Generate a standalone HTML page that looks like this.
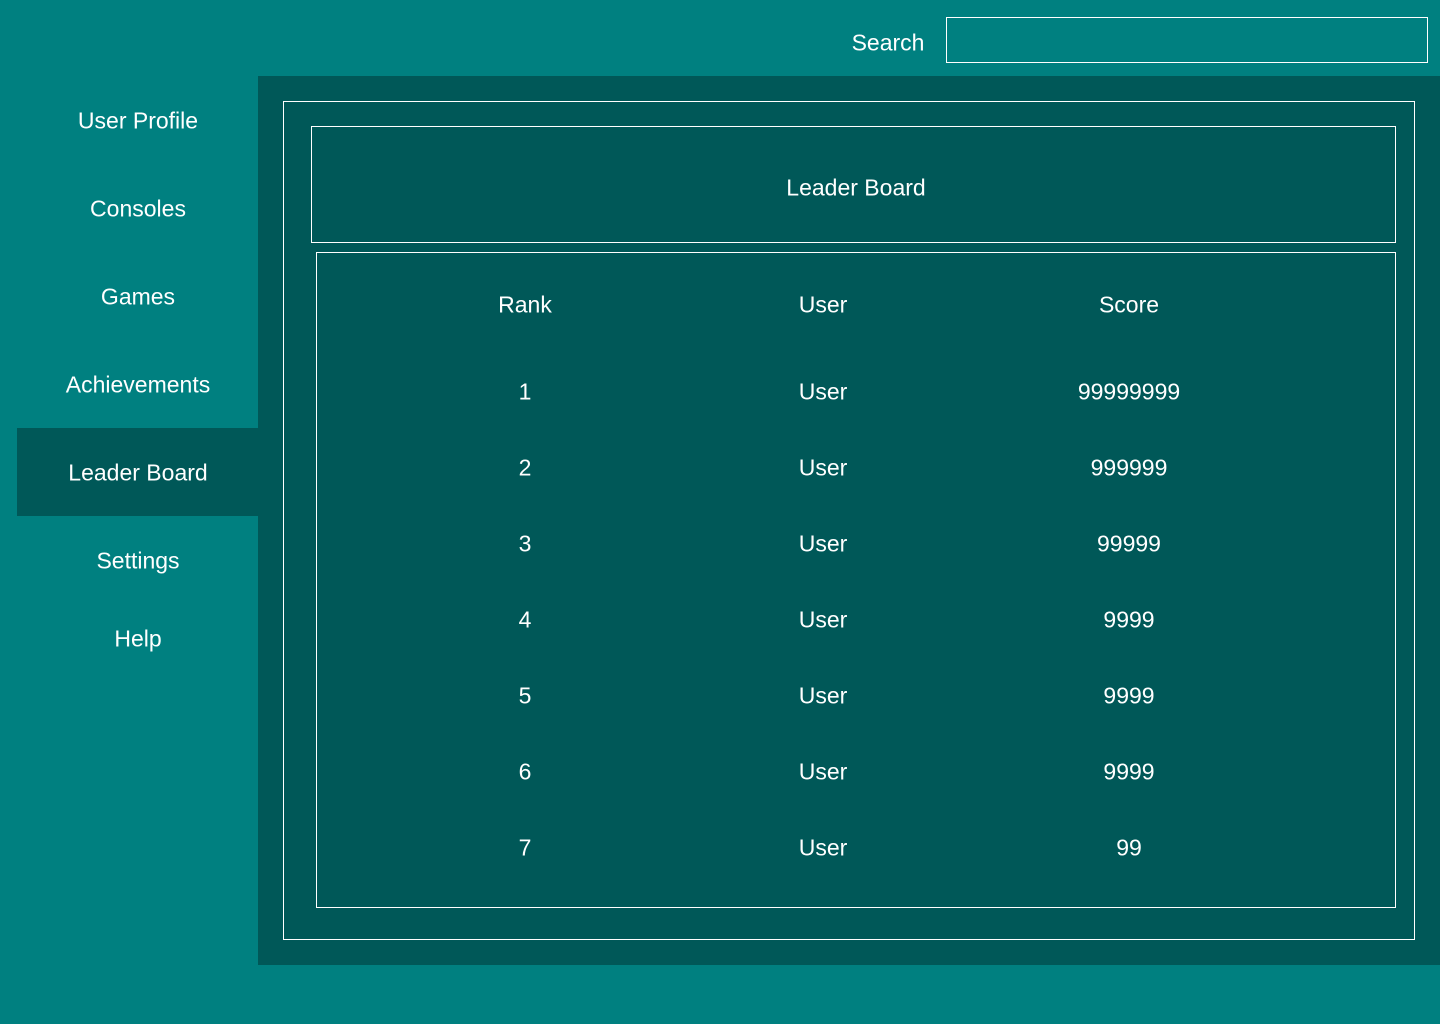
<!DOCTYPE html>
<html><head><meta charset="utf-8"><style>
*{margin:0;padding:0;box-sizing:border-box}
body{width:1440px;height:1024px;background:#008080;position:relative;overflow:hidden;font-family:"Liberation Sans",Arial,sans-serif;color:#fff;font-size:23px}
.a{position:absolute}
.c{position:absolute;transform:translate(-50%,-50%);white-space:nowrap;line-height:1;margin-top:1px}
.b{border:1px solid #fff}
</style></head><body>
<div class="c" style="left:888px;top:42px">Search</div>
<div class="a b" style="left:946px;top:17px;width:482px;height:46px"></div>
<div class="a" style="left:258px;top:76px;width:1182px;height:889px;background:#005858"></div>
<div class="a" style="left:17px;top:428px;width:241px;height:88px;background:#005858"></div>
<div class="c" style="left:138px;top:120px">User Profile</div>
<div class="c" style="left:138px;top:208px">Consoles</div>
<div class="c" style="left:138px;top:296px">Games</div>
<div class="c" style="left:138px;top:384px">Achievements</div>
<div class="c" style="left:138px;top:472px">Leader Board</div>
<div class="c" style="left:138px;top:560px">Settings</div>
<div class="c" style="left:138px;top:638px">Help</div>
<div class="a b" style="left:283px;top:101px;width:1132px;height:839px"></div>
<div class="a b" style="left:311px;top:126px;width:1085px;height:117px"></div>
<div class="c" style="left:856px;top:187px">Leader Board</div>
<div class="a b" style="left:316px;top:252px;width:1080px;height:656px"></div>
<div class="c" style="left:525px;top:304px">Rank</div><div class="c" style="left:823px;top:304px">User</div><div class="c" style="left:1129px;top:304px">Score</div>
<div class="c" style="left:525px;top:391px">1</div><div class="c" style="left:823px;top:391px">User</div><div class="c" style="left:1129px;top:391px">99999999</div>
<div class="c" style="left:525px;top:467px">2</div><div class="c" style="left:823px;top:467px">User</div><div class="c" style="left:1129px;top:467px">999999</div>
<div class="c" style="left:525px;top:543px">3</div><div class="c" style="left:823px;top:543px">User</div><div class="c" style="left:1129px;top:543px">99999</div>
<div class="c" style="left:525px;top:619px">4</div><div class="c" style="left:823px;top:619px">User</div><div class="c" style="left:1129px;top:619px">9999</div>
<div class="c" style="left:525px;top:695px">5</div><div class="c" style="left:823px;top:695px">User</div><div class="c" style="left:1129px;top:695px">9999</div>
<div class="c" style="left:525px;top:771px">6</div><div class="c" style="left:823px;top:771px">User</div><div class="c" style="left:1129px;top:771px">9999</div>
<div class="c" style="left:525px;top:847px">7</div><div class="c" style="left:823px;top:847px">User</div><div class="c" style="left:1129px;top:847px">99</div>
</body></html>
